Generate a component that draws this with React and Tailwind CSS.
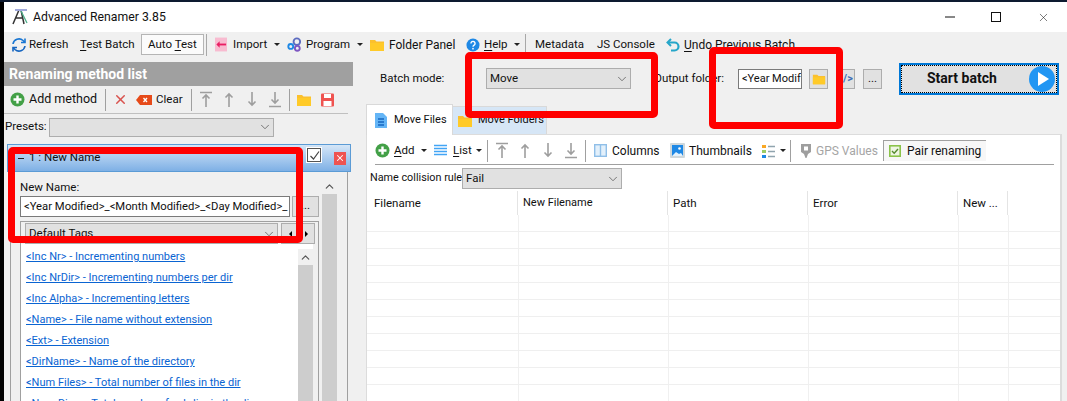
import React from 'react';
import { ChevronDown, ChevronUp, X } from 'lucide-react';

const Sep = ({ cls = 'mx-[5px]' }) => <div className={`w-px h-[22px] bg-[#a0a0a0] shrink-0 ${cls}`} />;
const Caret = () => <span className="inline-block w-0 h-0 ml-[5px] border-x-[3px] border-x-transparent border-t-[3px] border-t-[#222] shrink-0" />;
const Key = ({ children }) => <span className="underline underline-offset-2">{children}</span>;

const Folder = ({ size = 16 }) => (
  <svg width={size} height={size} viewBox="0 0 16 16" className="shrink-0">
    <path d="M1 3h5l1.500 1.500H15V14H1z" fill="#fbc02d" />
    <path d="M1 6h14v8H1z" fill="#ffca28" />
  </svg>
);

const AddIcon = () => (
  <svg width="15" height="15" viewBox="0 0 15 15" className="shrink-0">
    <circle cx="7.500" cy="7.500" r="7" fill="#43a047" />
    <path d="M7.500 3.500v8M3.500 7.500h8" stroke="#fff" strokeWidth="2.400" />
  </svg>
);

const MoveArrows = ({ cls = '' }) => {
  const arrows = [
    'M2 1.500h12M8 16V4M4.500 7.500 8 4l3.500 3.500',
    'M8 16V3M4.500 6.500 8 3l3.500 3.500',
    'M8 1v13M4.500 10.500 8 14l3.500-3.500',
    'M8 1v11M4.500 8.500 8 12l3.500-3.500M2 15.500h12',
  ];
  return (
    <div className={`flex items-center gap-[7px] ${cls}`}>
      {arrows.map((d) => (
        <svg key={d} width="16" height="17" viewBox="0 0 16 17" fill="none" stroke="#9e9e9e" strokeWidth="1.600" className="shrink-0">
          <path d={d} />
        </svg>
      ))}
    </div>
  );
};

const Combo = ({ label, className }) => (
  <div className={`flex items-center justify-between bg-[#e1e1e1] border border-[#adadad] pl-[3px] pr-px shrink-0 ${className}`}>
    <span>{label}</span>
    <ChevronDown size={14} strokeWidth={1.300} className="text-[#555]" />
  </div>
);

const MainToolbar = () => (
  <div className="flex items-center h-[27px] pb-[2px] pl-[6px] shrink-0 whitespace-nowrap">
    <svg width="16" height="16" viewBox="0 0 16 16" fill="none" strokeWidth="1.600" className="mr-[2px] ml-[1px] shrink-0">
      <path d="M2 7a6 6 0 0 1 10-3.500L14 5.500" stroke="#1976d2" />
      <path d="M14 1.500v4h-4" stroke="#1976d2" />
      <path d="M14 9a6 6 0 0 1-10 3.500L2 10.500" stroke="#1565c0" />
      <path d="M2 14.500v-4h4" stroke="#1565c0" />
    </svg>
    <span className="w-[39px]">Refresh</span>
    <span className="ml-[12px] w-[55px]"><Key>T</Key>est Batch</span>
    <span className="ml-[6px] h-[21px] w-[63px] pl-[6px] flex items-center bg-[#fbfbfb] border border-[#b5b5b5]"><span>Auto <Key>T</Key>est</span></span>
    <span className="w-px h-[22px] bg-[#a8a8a8] ml-[2px] mr-[8px] shrink-0" />
    <svg width="12" height="15" viewBox="0 0 13 15" className="mr-[6px] shrink-0">
      <rect width="13" height="15" fill="#f8bbd0" />
      <path d="M3 7.500h9" stroke="#e91e63" strokeWidth="2" />
      <path d="M5 4 1.500 7.500 5 11" fill="#e91e63" />
    </svg>
    <span className="w-[36px]">Import</span><Caret />
    <svg width="15" height="15" viewBox="0 0 16 16" className="ml-[7px] mr-[4px] shrink-0">
      <circle cx="10.500" cy="5" r="3.500" fill="none" stroke="#5c6bc0" strokeWidth="2" />
      <circle cx="4" cy="10" r="2.600" fill="none" stroke="#1e88e5" strokeWidth="2" />
      <circle cx="11" cy="12" r="2.600" fill="none" stroke="#7e57c2" strokeWidth="2" />
    </svg>
    <span className="w-[46px]">Program</span><Caret />
    <span className="ml-[6px] mr-[4px]"><Folder /></span>
    <span className="w-[66px] text-[12px]">Folder Panel</span>
    <svg width="14" height="14" viewBox="0 0 15 15" className="ml-[11px] mr-[4px] shrink-0">
      <circle cx="7.500" cy="7.500" r="7" fill="#1e88e5" />
      <path d="M5.300 5.800a2.200 2.200 0 1 1 3.400 1.900c-.8.500-1.200.9-1.200 1.800" fill="none" stroke="#fff" strokeWidth="1.500" />
      <circle cx="7.500" cy="11.400" r=".9" fill="#fff" />
    </svg>
    <span className="w-[25px]"><Key>H</Key>elp</span><Caret />
    <span className="w-px h-[22px] bg-[#a8a8a8] ml-[5px] mr-[9px] shrink-0" />
    <span className="w-[50px]">Metadata</span>
    <span className="ml-[12px] w-[58px]">JS Console</span>
    <svg width="14" height="14" viewBox="0 0 14 14" fill="none" className="ml-[11px] mr-[4px] shrink-0">
      <path d="M5 1 1.500 4.500 5 8" stroke="#26a6c9" strokeWidth="2" />
      <path d="M2 4.500h6.500a3.500 3.500 0 0 1 0 8H5" stroke="#26a6c9" strokeWidth="2.200" />
    </svg>
    <span className="text-[12px]"><Key>U</Key>ndo Previous Batch</span>
  </div>
);

const tags = [
  '<Inc Nr> - Incrementing numbers',
  '<Inc NrDir> - Incrementing numbers per dir',
  '<Inc Alpha> - Incrementing letters',
  '<Name> - File name without extension',
  '<Ext> - Extension',
  '<DirName> - Name of the directory',
  '<Num Files> - Total number of files in the dir',
  '<Num Dirs> - Total number of subdirs in the dir',
];

const ScrollBar = ({ className }) => (
  <div className={`flex flex-col bg-[#f0f0f0] ${className}`}>
    <div className="h-[16px] flex items-center justify-center shrink-0">
      <ChevronUp size={13} strokeWidth={2.200} className="text-[#555]" />
    </div>
    <div className="flex-1 bg-[#cdcdcd]" />
  </div>
);

const LeftPanel = () => (
  <div className="w-[349px] shrink-0 flex flex-col whitespace-nowrap">
    <div className="h-[24px] bg-[#a0a0a0] text-white font-bold text-[14px] leading-[24px] pl-[5px] shrink-0">Renaming method list</div>
    <div className="h-[27px] mr-[5px] flex items-center pl-[6px] border-b border-[#c0c0c0] shrink-0 box-content">
      <AddIcon />
      <span className="ml-[4px] w-[68px] text-[12.500px]">Add method</span>
      <Sep cls="ml-[8px] mr-[5px]" />
      <X size={15} strokeWidth={2.400} className="text-[#d9534f] ml-[2px] mr-[8px] shrink-0" />
      <svg width="16" height="10" viewBox="0 0 16 10" className="shrink-0">
        <path d="M4 0h12v10H4L0 5z" fill="#e64a19" />
        <path d="M7.500 3 11 7M11 3 7.500 7" stroke="#fff" strokeWidth="1.300" />
      </svg>
      <span className="ml-[4px] w-[27px]">Clear</span>
      <Sep cls="ml-[8px] mr-[5px]" />
      <MoveArrows cls="ml-px" />
      <Sep cls="ml-[6px] mr-[5px]" />
      <span className="ml-px"><Folder /></span>
      <svg width="13" height="14" viewBox="0 0 13 14" className="ml-[9px] shrink-0">
        <rect width="13" height="13" y=".5" rx="1" fill="#ef5350" />
        <rect x="3" y="1" width="7" height="4" fill="#fff" />
        <rect x="2.500" y="8" width="8" height="5" fill="#fff" />
      </svg>
    </div>
    <div className="h-[20px] mt-[3px] flex items-center pl-px shrink-0">
      <span className="w-[44px]">Presets:</span>
      <Combo label="" className="w-[225px] h-[19px]" />
    </div>
    <div className="mt-[7px] ml-[3px] mr-[2px] flex-1 min-h-0 flex flex-col">
      <div className="h-[28px] shrink-0 flex items-center pl-[21px] pr-[3px] border border-[#5b9bd5] bg-gradient-to-b from-[#d5e6f7] to-[#7eb0e5]">
        <span className="w-[6px] h-px bg-[#222] -ml-[11px] mr-[5px]" />
        <span>1 : New Name</span>
        <span className="ml-auto w-[14px] h-[14px] bg-white border border-[#555] outline-1 outline-white flex items-center justify-center -mt-[6px]">
          <svg width="11" height="11" viewBox="0 0 11 11" fill="none"><path d="M1.500 6 4.500 9 10 1.500" stroke="#444" strokeWidth="1.200" /></svg>
        </span>
        <span className="ml-[13px] mr-px w-[12px] h-[13px] bg-[#ef5350] flex items-center justify-center">
          <X size={10} strokeWidth={2.500} className="text-white" />
        </span>
      </div>
      <div className="flex-1 min-h-0 mx-[3px] border-x border-[#a0a0a0] bg-[#f0f0f0] flex pl-[9px] pt-[7px] gap-[2px]">
        <div className="w-[300px] shrink-0 flex flex-col">
          <div className="h-[16px] leading-[16px]">New Name:</div>
          <div className="flex gap-[2px] mt-px">
            <div className="w-[270px] h-[21px] bg-white border border-[#7a7a7a] pl-[3px] leading-[19px] text-[11.250px] whitespace-nowrap overflow-hidden">{'<Year Modified>_<Month Modified>_<Day Modified>_'}</div>
            <div className="w-[27px] h-[21px] bg-[#e1e1e1] border border-[#adadad] leading-[17px] text-center">...</div>
          </div>
          <div className="flex-1 min-h-0 mt-[4px] mr-px border-x border-t border-[#a0a0a0] pt-px flex flex-col">
            <div className="flex items-center shrink-0 pl-[4px]">
              <Combo label="Default Tags" className="w-[253px] h-[21px]" />
              <div className="ml-[3px] w-[34px] h-[21px] bg-[#e1e1e1] border border-[#adadad] flex items-center justify-around">
                <span className="w-0 h-0 border-y-[3px] border-y-transparent border-r-[3px] border-r-black" />
                <span className="w-0 h-0 border-y-[3px] border-y-transparent border-l-[3px] border-l-black" />
              </div>
            </div>
            <div className="flex flex-1 min-h-0">
              <div className="w-[277px] bg-white pl-[5px] pt-[2px] overflow-hidden">
                {tags.map((t) => (
                  <div key={t} className="h-[21px] leading-[21px] whitespace-nowrap text-[#0a64d2] underline text-[11px]">{t}</div>
                ))}
              </div>
              <div className="w-[15px] bg-white pt-[5px] flex">
                <ScrollBar className="w-[15px]" />
              </div>
            </div>
          </div>
        </div>
        <ScrollBar className="w-[15px] -mt-px" />
      </div>
    </div>
  </div>
);

const ListToolbar = () => (
  <div className="h-[27px] ml-[8px] mr-[6px] mt-[2px] flex items-center border-b border-[#a0a0a0] shrink-0 box-content whitespace-nowrap">
    <AddIcon />
    <span className="ml-[4px] w-[22px]"><Key>A</Key>dd</span><Caret />
    <svg width="13" height="13" viewBox="0 0 13 13" className="ml-[7px] mr-[6px] shrink-0" fill="none" stroke="#42a5f5" strokeWidth="1.300">
      <path d="M0 1.500h13M0 4.500h13M0 7.500h13M0 10.500h13" />
    </svg>
    <span className="w-[18px]"><Key>L</Key>ist</span><Caret />
    <Sep />
    <MoveArrows cls="ml-px" />
    <Sep cls="ml-[6px] mr-[5px]" />
    <svg width="13" height="13" viewBox="0 0 13 13" className="ml-[3px] mr-[5px] shrink-0">
      <rect x=".7" y=".7" width="11.600" height="11.600" fill="#e3f0fb" stroke="#90bfe8" strokeWidth="1.400" />
      <path d="M6.500 1v11" stroke="#90bfe8" strokeWidth="1.400" />
    </svg>
    <span className="w-[48px] text-[12px]">Columns</span>
    <svg width="15" height="15" viewBox="0 0 15 15" className="ml-[10px] mr-[4px] shrink-0">
      <rect width="15" height="15" rx="1" fill="#cfd8dc" />
      <rect x="2" y="2" width="11" height="11" fill="#1e88e5" />
      <circle cx="9.500" cy="5.500" r="1.300" fill="#fff" />
      <path d="M2 13l4-4 3 2 2-1 2 3z" fill="#e3f2fd" />
    </svg>
    <span className="w-[62px] text-[12px]">Thumbnails</span>
    <svg width="13" height="14" viewBox="0 0 13 14" className="ml-[11px] shrink-0">
      <rect y="1" width="4" height="3" fill="#f9a825" />
      <rect y="6" width="4" height="3" fill="#9ccc65" />
      <rect y="11" width="4" height="3" fill="#1e88e5" />
      <path d="M6 2.500h7M6 7.500h7M6 12.500h7" stroke="#90a4ae" strokeWidth="1.300" />
    </svg>
    <Caret />
    <span className="w-px h-[22px] bg-[#a0a0a0] ml-[4px] mr-[9px] shrink-0" />
    <svg width="12" height="15" viewBox="0 0 12 15" className="mr-[4px] shrink-0">
      <path d="M1 1h10v8l-3 2-1.500 4h-1L4 11 1 9z" fill="#9e9e9e" />
      <rect x="4" y="3.500" width="4" height="4" fill="#fff" />
    </svg>
    <span className="text-[#a5a5a5] w-[61px] text-[12px]">GPS Values</span>
    <div className="ml-[6px] w-[103px] h-[21px] flex items-center pl-[5px] bg-[#f7f7f7] border-l border-t border-[#a0a0a0] shrink-0">
      <svg width="12" height="12" viewBox="0 0 12 12" className="mr-[6px] shrink-0">
        <rect x=".8" y=".8" width="10.400" height="10.400" fill="#eef5e4" stroke="#8bc34a" strokeWidth="1.600" />
        <path d="M3 6l2.200 2.200L9 4" fill="none" stroke="#558b2f" strokeWidth="1.400" />
      </svg>
      <span className="text-[12px]">Pair renaming</span>
    </div>
  </div>
);

const columns = [
  { name: 'Filename', w: 'w-[151px]', pad: 'pl-[7px]' },
  { name: 'New Filename', w: 'w-[150px]', pad: 'pl-[5px] text-[11px]' },
  { name: 'Path', w: 'w-[140px]', pad: 'pl-[5px]' },
  { name: 'Error', w: 'w-[150px]', pad: 'pl-[5px]' },
  { name: 'New ...', w: 'w-[50px]', pad: 'pl-[5px]' },
];

const FileGrid = () => (
  <div className="flex-1 min-h-0 overflow-hidden mt-[2px]">
    <div className="flex h-[24px]">
      {columns.map((c) => (
        <div key={c.name} className={`${c.w} ${c.pad} shrink-0 leading-[24px] border-r border-[#e4e4e4]`}>{c.name}</div>
      ))}
    </div>
    {[0, 1, 2, 3, 4, 5, 6, 7, 8, 9, 10].map((i) => (
      <div key={i} className="flex h-[16px] pl-px border-b border-[#efefef] box-content">
        {columns.map((c) => (
          <div key={c.name} className={`${c.w} shrink-0 border-r border-[#f0f0f0]`} />
        ))}
      </div>
    ))}
  </div>
);

const RightPanel = () => (
  <div className="flex-1 min-w-0 flex flex-col pl-[13px] whitespace-nowrap">
    <div className="h-[33px] shrink-0 flex items-center">
      <span className="ml-[14px] w-[106px]">Batch mode:</span>
      <Combo label="Move" className="w-[145px] h-[21px]" />
      <span className="ml-[23px] w-[84px]">Output folder:</span>
      <div className="w-[64px] h-[20px] bg-white border border-[#7a7a7a] pl-[3px] leading-[18px] text-[11px] whitespace-nowrap overflow-hidden">{'<Year Modif'}</div>
      <div className="ml-[7px] w-[19px] h-[20px] bg-[#e1e1e1] border border-[#adadad] flex items-center justify-center"><Folder size={14} /></div>
      <div className="ml-[13px] w-[14px] h-[20px] bg-[#e1e1e1] border border-[#adadad] text-[#3f6fb5] font-bold text-[11px] leading-[18px] text-center overflow-hidden">{'/>'}</div>
      <div className="ml-[8px] w-[19px] h-[20px] bg-[#e1e1e1] border border-[#adadad] leading-[16px] text-center">...</div>
      <div className="ml-[17px] w-[160px] h-[32px] border-2 border-[#0078d7] bg-[#e1e1e1] outline-1 -outline-offset-3 outline-dotted outline-black flex items-center relative">
        <span className="font-bold text-[14px] ml-[26px]">Start batch</span>
        <span className="absolute right-[2px] top-px w-[26px] h-[26px] rounded-full bg-[#2196f3] flex items-center justify-center">
          <span className="w-0 h-0 ml-[3px] border-y-[7px] border-y-transparent border-l-[11px] border-l-white" />
        </span>
      </div>
    </div>
    <div className="h-[30px] shrink-0 flex items-end mt-[9px]">
      <div className="w-[87px] h-[31px] bg-white border-x border-t border-[#d9d9d9] flex items-center pl-[8px] gap-[7px] text-[11px] relative z-10 -mb-px">
        <svg width="12" height="15" viewBox="0 0 12 15" className="shrink-0">
          <path d="M0 0h8l4 4v11H0z" fill="#64b5f6" />
          <path d="M3 6h6M3 9h6M3 12h6" stroke="#1565c0" strokeWidth="1.300" />
        </svg>
        <span>Move Files</span>
      </div>
      <div className="w-[94px] h-[28px] bg-[#d6e6f6] border-r border-t border-[#d9d9d9] flex items-center pl-[4px] gap-[5px] text-[11px]">
        <Folder />
        <span>Move Folders</span>
      </div>
    </div>
    <div className="flex-1 min-h-0 mr-[5px] bg-white border-l border-r-2 border-t border-[#dcdcdc] flex flex-col">
      <ListToolbar />
      <div className="h-[21px] mt-[3px] ml-[3px] shrink-0 flex items-center">
        <span className="w-[92px] text-[10.800px]">Name collision rule:</span>
        <Combo label="Fail" className="w-[160px] h-[21px]" />
      </div>
      <FileGrid />
    </div>
  </div>
);

const RedBox = ({ className }) => (
  <div className={`absolute border-[7px] border-[#ff0000] rounded-[5px] pointer-events-none z-20 ${className}`} />
);

export default function App() {
  return (
    <div className="relative w-[1067px] h-[401px] overflow-hidden bg-black font-['Roboto','Liberation_Sans',sans-serif] text-[11.5px] text-[#111]">
      <div className="h-[2px] bg-[#0d1a30]" />
      <div className="flex h-[399px] pl-[4px]">
        <div className="flex-1 min-w-0 flex flex-col bg-[#f0f0f0]">
          <div className="h-[30px] bg-white flex items-center shrink-0">
            <svg width="18" height="18" viewBox="0 0 18 18" fill="none" className="ml-[8px] shrink-0">
              <path d="M1 16 7 2h2l3 14M4 10h7" stroke="#333" strokeWidth="1.500" />
              <path d="M9 3l6 12" stroke="#4caf8a" strokeWidth="1.200" />
              <path d="M3 2h12" stroke="#9fa8da" strokeWidth="2" />
            </svg>
            <span className="ml-[3px] text-[12.25px]">Advanced Renamer 3.85</span>
            <div className="ml-auto flex items-center text-[#111]">
              <svg width="10" height="10" viewBox="0 0 10 10" className="mr-[36px]"><path d="M0 5h10" stroke="#111" /></svg>
              <svg width="10" height="10" viewBox="0 0 10 10" className="mr-[36px]"><rect x=".5" y=".5" width="9" height="9" fill="none" stroke="#111" /></svg>
              <X size={13} strokeWidth={1} className="mr-[17px]" />
            </div>
          </div>
          <MainToolbar />
          <div className="flex flex-1 min-h-0 mt-[3px]">
            <LeftPanel />
            <RightPanel />
          </div>
        </div>
      </div>
      <RedBox className="left-[8px] top-[147px] w-[295px] h-[96px]" />
      <RedBox className="left-[465px] top-[52px] w-[193px] h-[66px]" />
      <RedBox className="left-[709px] top-[47px] w-[134px] h-[82px]" />
    </div>
  );
}
